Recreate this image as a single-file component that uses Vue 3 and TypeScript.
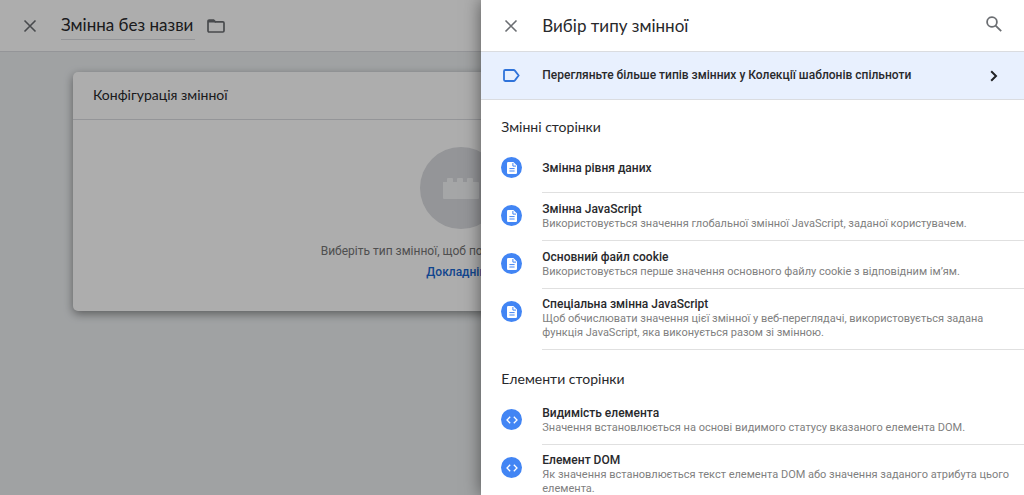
<script setup lang="ts">
import { ref } from 'vue'

type IconKind = 'page' | 'code'

interface VariableType {
  title: string
  description?: string
}

interface Section {
  heading: string
  icon: IconKind
  items: VariableType[]
}

const variableName = ref('Змінна без назви')

const sections: Section[] = [
  {
    heading: 'Змінні сторінки',
    icon: 'page',
    items: [
      { title: 'Змінна рівня даних' },
      {
        title: 'Змінна JavaScript',
        description: 'Використовується значення глобальної змінної JavaScript, заданої користувачем.',
      },
      {
        title: 'Основний файл cookie',
        description: 'Використовується перше значення основного файлу cookie з відповідним ім’ям.',
      },
      {
        title: 'Спеціальна змінна JavaScript',
        description:
          'Щоб обчислювати значення цієї змінної у веб-переглядачі, використовується задана функція JavaScript, яка виконується разом зі змінною.',
      },
    ],
  },
  {
    heading: 'Елементи сторінки',
    icon: 'code',
    items: [
      {
        title: 'Видимість елемента',
        description: 'Значення встановлюється на основі видимого статусу вказаного елемента DOM.',
      },
      {
        title: 'Елемент DOM',
        description:
          'Як значення встановлюється текст елемента DOM або значення заданого атрибута цього елемента.',
      },
    ],
  },
]
</script>

<template>
  <div class="app">
    <main class="editor">
      <header class="bar">
        <button class="icon-button" type="button" aria-label="Закрити">
          <svg width="14" height="14" viewBox="0 0 14 14"><path d="M1.5 1.5l11 11M12.5 1.5l-11 11" fill="none" stroke="currentColor" stroke-width="1.6" /></svg>
        </button>
        <input v-model="variableName" class="name" type="text" aria-label="Назва змінної" />
        <button class="icon-button folder" type="button" aria-label="Папка">
          <svg width="18" height="14" viewBox="0 0 18 14"><path d="M1 2.2Q1 1 2.2 1H6.6L8.4 2.8H15.8Q17 2.8 17 4V11.8Q17 13 15.8 13H2.2Q1 13 1 11.8Z" fill="none" stroke="currentColor" stroke-width="1.7" /><path d="M1 1H7L9 3.6H1Z" fill="currentColor" /></svg>
        </button>
      </header>
      <section class="card">
        <h2 class="card-title">Конфігурація змінної</h2>
        <div class="card-body">
          <span class="brick">
            <svg width="36" height="21" viewBox="0 0 36 21"><path d="M0 4H4V1Q4 0 5 0H9Q10 0 10 1V4H14V1Q14 0 15 0H19Q20 0 20 1V4H24V1Q24 0 25 0H29Q30 0 30 1V4H35Q36 4 36 5V20Q36 21 35 21H1Q0 21 0 20Z" fill="#f4f5f7" /></svg>
          </span>
          <p class="hint">Виберіть тип змінної, щоб почати налаштування…</p>
          <a class="more" href="#">Докладніше</a>
        </div>
      </section>
    </main>

    <div class="scrim"></div>

    <aside class="panel" role="dialog" aria-labelledby="panel-title">
      <header class="bar panel-bar">
        <button class="icon-button" type="button" aria-label="Закрити">
          <svg width="14" height="14" viewBox="0 0 14 14"><path d="M1.5 1.5l11 11M12.5 1.5l-11 11" fill="none" stroke="currentColor" stroke-width="1.6" /></svg>
        </button>
        <h1 id="panel-title" class="panel-title">Вибір типу змінної</h1>
        <button class="icon-button search" type="button" aria-label="Пошук">
          <svg width="16" height="16" viewBox="0 0 16 16"><g fill="none" stroke="currentColor" stroke-width="1.8"><circle cx="6" cy="6" r="4.9" /><path d="M9.6 9.6L15.2 15.2" /></g></svg>
        </button>
      </header>

      <a class="gallery" href="#">
        <svg class="tag" width="17" height="13" viewBox="0 0 17 13"><path d="M2.2 1H10.6Q11.4 1 11.9 1.6L15.6 6.5L11.9 11.4Q11.4 12 10.6 12H2.2Q1 12 1 10.8V2.2Q1 1 2.2 1Z" fill="none" stroke="#2f73da" stroke-width="1.8" /></svg>
        <span class="gallery-text">Перегляньте більше типів змінних у Колекції шаблонів спільноти</span>
        <svg class="chevron" width="8" height="12" viewBox="0 0 8 12"><path d="M1.2 1.2L6 6L1.2 10.8" fill="none" stroke="#202124" stroke-width="2" /></svg>
      </a>

      <section v-for="section in sections" :key="section.heading" class="group">
        <h2 class="group-title">{{ section.heading }}</h2>
        <ul class="list">
          <li v-for="item in section.items" :key="item.title">
            <button class="row" type="button">
              <span class="badge">
                <svg v-if="section.icon === 'page'" width="10" height="12" viewBox="0 0 10 12"><path d="M1.2 0H6.4L10 3.6V10.8Q10 12 8.8 12H1.2Q0 12 0 10.8V1.2Q0 0 1.2 0Z" fill="#fff" /><path d="M5.9 1V4.1H9M2.4 6.6H7.6M2.4 9H7.6" fill="none" stroke="#4285f4" stroke-width="1" /></svg>
                <svg v-else width="12" height="8" viewBox="0 0 12 8"><path d="M4.2 .8L1 4L4.2 7.2M7.8 .8L11 4L7.8 7.2" fill="none" stroke="#fff" stroke-width="1.3" /></svg>
              </span>
              <span class="row-text">
                <span class="row-title">{{ item.title }}</span>
                <span v-if="item.description" class="row-desc">{{ item.description }}</span>
              </span>
            </button>
          </li>
        </ul>
      </section>
    </aside>
  </div>
</template>

<style>
body {
  margin: 0;
}
</style>

<style scoped>
.app {
  position: relative;
  height: 100vh;
  overflow: hidden;
  font-family: Roboto, "Noto Sans", sans-serif;
  color: #28292c;
}

.app *,
.app {
  box-sizing: border-box;
}

svg {
  display: block;
}

button {
  border: 0;
  padding: 0;
  background: none;
  font: inherit;
  color: inherit;
  cursor: pointer;
}

h1,
h2,
p,
ul {
  margin: 0;
  padding: 0;
  font-weight: 400;
}

.name,
.card-title,
.panel-title,
.group-title {
  font-family: Lato, Roboto, sans-serif;
}

.editor {
  min-height: 100%;
  background: #eceff1;
}

.bar {
  display: flex;
  align-items: center;
  height: 52px;
  padding: 0 20px;
  background: #fff;
  border-bottom: 1px solid #dadce0;
}

.icon-button {
  display: flex;
  align-items: center;
  justify-content: center;
  width: 20px;
  height: 20px;
  color: #6b6e72;
}

.search {
  align-items: flex-start;
}

.name {
  width: 134px;
  height: 28px;
  margin: 0 11px 0 21px;
  padding: 0 0 2px;
  border: 0;
  border-bottom: 1px solid #dadce0;
  background: none;
  font-size: 17px;
  color: #28292c;
}

.card {
  max-width: 776px;
  margin: 20px 73px;
  border-radius: 5px;
  background: #fff;
  box-shadow: 0 3px 10px rgba(0, 0, 0, 0.42);
}

.card-title {
  padding: 0 20px 1px;
  border-bottom: 1px solid #dadce0;
  font-size: 14px;
  line-height: 46px;
}

.card-body {
  display: flex;
  flex-direction: column;
  align-items: center;
  padding: 27px 0 28px;
}

.brick {
  display: flex;
  align-items: center;
  justify-content: center;
  width: 82px;
  height: 82px;
  border-radius: 50%;
  background: #dadce0;
}

.hint {
  margin-top: 12px;
  font-size: 12px;
  line-height: 21px;
  color: #757575;
}

.more {
  font-size: 12px;
  font-weight: 500;
  line-height: 21px;
  color: #1967d2;
  text-decoration: none;
}

.scrim {
  position: absolute;
  inset: 0;
  background: rgba(0, 0, 0, 0.32);
}

.panel {
  position: absolute;
  top: 0;
  right: 0;
  bottom: 0;
  width: 53%;
  overflow-y: auto;
  scrollbar-width: none;
  background: #fff;
  box-shadow: 0 0 16px rgba(0, 0, 0, 0.5);
}

.panel-title {
  flex: 1;
  margin-left: 21px;
  font-size: 17px;
  line-height: 24px;
}

.gallery {
  display: flex;
  align-items: center;
  height: 48px;
  padding: 0 26px 0 22px;
  border-bottom: 1px solid #dadce0;
  background: #e8f0fe;
  color: inherit;
  text-decoration: none;
}

.gallery-text {
  flex: 1;
  margin-left: 22px;
  padding-bottom: 2px;
  font-size: 12px;
  font-weight: 500;
  line-height: 16px;
}

.group {
  padding: 17px 0 0 20px;
}

.group + .group {
  padding-top: 19px;
}

.group-title {
  margin-bottom: 8px;
  font-size: 14px;
  line-height: 20px;
}

.list {
  list-style: none;
}

.row {
  display: flex;
  width: 100%;
  text-align: left;
}

.badge {
  display: flex;
  flex: none;
  align-items: center;
  justify-content: center;
  width: 21px;
  height: 21px;
  margin: 12px 20px 0 0;
  border-radius: 50%;
  background: #4285f4;
}

.row-text {
  display: flex;
  flex: 1;
  flex-direction: column;
  justify-content: center;
  min-height: 48px;
  padding: 7px 12px 9px 0;
  border-bottom: 1px solid #e0e0e0;
}

.row-title {
  font-size: 12px;
  font-weight: 500;
  line-height: 16px;
}

.row-desc {
  font-size: 11px;
  line-height: 14px;
  color: #808080;
}
</style>
